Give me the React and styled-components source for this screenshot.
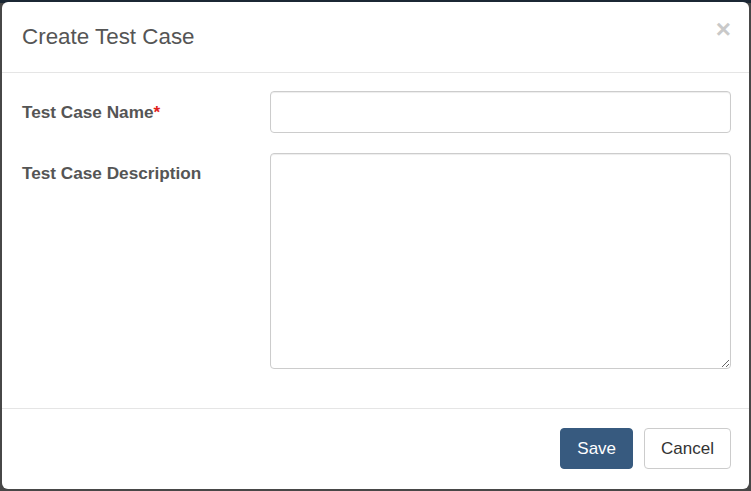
import styled, { createGlobalStyle } from 'styled-components';

const GlobalStyle = createGlobalStyle`
  html, body {
    margin: 0;
    padding: 0;
  }
  body {
    width: 751px;
    height: 491px;
    overflow: hidden;
    background: linear-gradient(#1b2734 0 3px, #474747 3px);
    font-family: 'Liberation Sans', Arial, sans-serif;
  }
`;

const App = () => {
  return (
    <>
      <GlobalStyle />
      <ModalBlock>
        <ModalHeader>
          <Title>Create Test Case</Title>
          <CloseButton type='button' aria-label='Close'>
            ×
          </CloseButton>
        </ModalHeader>
        <ModalBody>
          <FormRow>
            <Label htmlFor='tc-name' $top={1}>
              Test Case Name<Required>*</Required>
            </Label>
            <Input id='tc-name' type='text' />
          </FormRow>
          <FormRow>
            <Label htmlFor='tc-desc'>Test Case Description</Label>
            <TextArea id='tc-desc' />
          </FormRow>
        </ModalBody>
        <ModalFooter>
          <Button $primary>Save</Button>
          <Button>Cancel</Button>
        </ModalFooter>
      </ModalBlock>
    </>
  );
};

const ModalBlock = styled.div`
  display: flex;
  flex-direction: column;
  width: 747px;
  height: 487px;
  margin: 2px 0 0 2px;
  background: #fff;
  border-radius: 6px;
  box-sizing: border-box;
  overflow: hidden;
`;

const ModalHeader = styled.div`
  display: flex;
  justify-content: space-between;
  align-items: center;
  height: 70px;
  padding: 0 18px 0 20px;
  border-bottom: 1px solid #e5e5e5;
`;

const Title = styled.h4`
  margin: 0;
  font-size: 22.4px;
  font-weight: normal;
  line-height: 1.1;
  color: #555;
`;

const CloseButton = styled.button`
  align-self: flex-start;
  margin-top: 14px;
  padding: 0;
  border: 0;
  background: transparent;
  font-family: 'Liberation Sans', Arial, sans-serif;
  font-size: 26px;
  font-weight: bold;
  line-height: 1;
  color: #c9c9c9;
  cursor: pointer;
`;

const ModalBody = styled.div`
  display: flex;
  flex-direction: column;
  gap: 20px;
  padding: 18px 18px 39px 20px;
  border-bottom: 1px solid #e5e5e5;
`;

const FormRow = styled.div`
  display: grid;
  grid-template-columns: 248px 1fr;
  align-items: start;
`;

const Label = styled.label`
  padding-top: ${props => props.$top || 0}px;
  font-size: 17.2px;
  font-weight: bold;
  line-height: 40px;
  color: #555;
`;

const Required = styled.span`
  color: #e0201b;
`;

const fieldStyle = `
  display: block;
  width: 100%;
  box-sizing: border-box;
  border: 1px solid #ccc;
  border-radius: 4px;
  padding: 8px 12px;
  font-family: 'Liberation Sans', Arial, sans-serif;
  font-size: 17px;
  color: #555;
  background: #fff;
  box-shadow: inset 0 1px 1px rgba(0, 0, 0, 0.075);
  outline: none;
`;

const Input = styled.input`
  ${fieldStyle}
  height: 42px;
`;

const TextArea = styled.textarea`
  ${fieldStyle}
  height: 216px;
  resize: both;
`;

const ModalFooter = styled.div`
  display: flex;
  justify-content: flex-end;
  gap: 11px;
  padding: 19px 18px 20px;
`;

const Button = styled.button`
  height: 41px;
  padding: 0 16px;
  border: 1px solid ${props => (props.$primary ? '#375a7f' : '#ccc')};
  border-radius: 4px;
  background: ${props => (props.$primary ? '#375a7f' : '#fff')};
  color: ${props => (props.$primary ? '#fff' : '#333')};
  font-family: 'Liberation Sans', Arial, sans-serif;
  font-size: 17px;
  cursor: pointer;
`;

export default App;
